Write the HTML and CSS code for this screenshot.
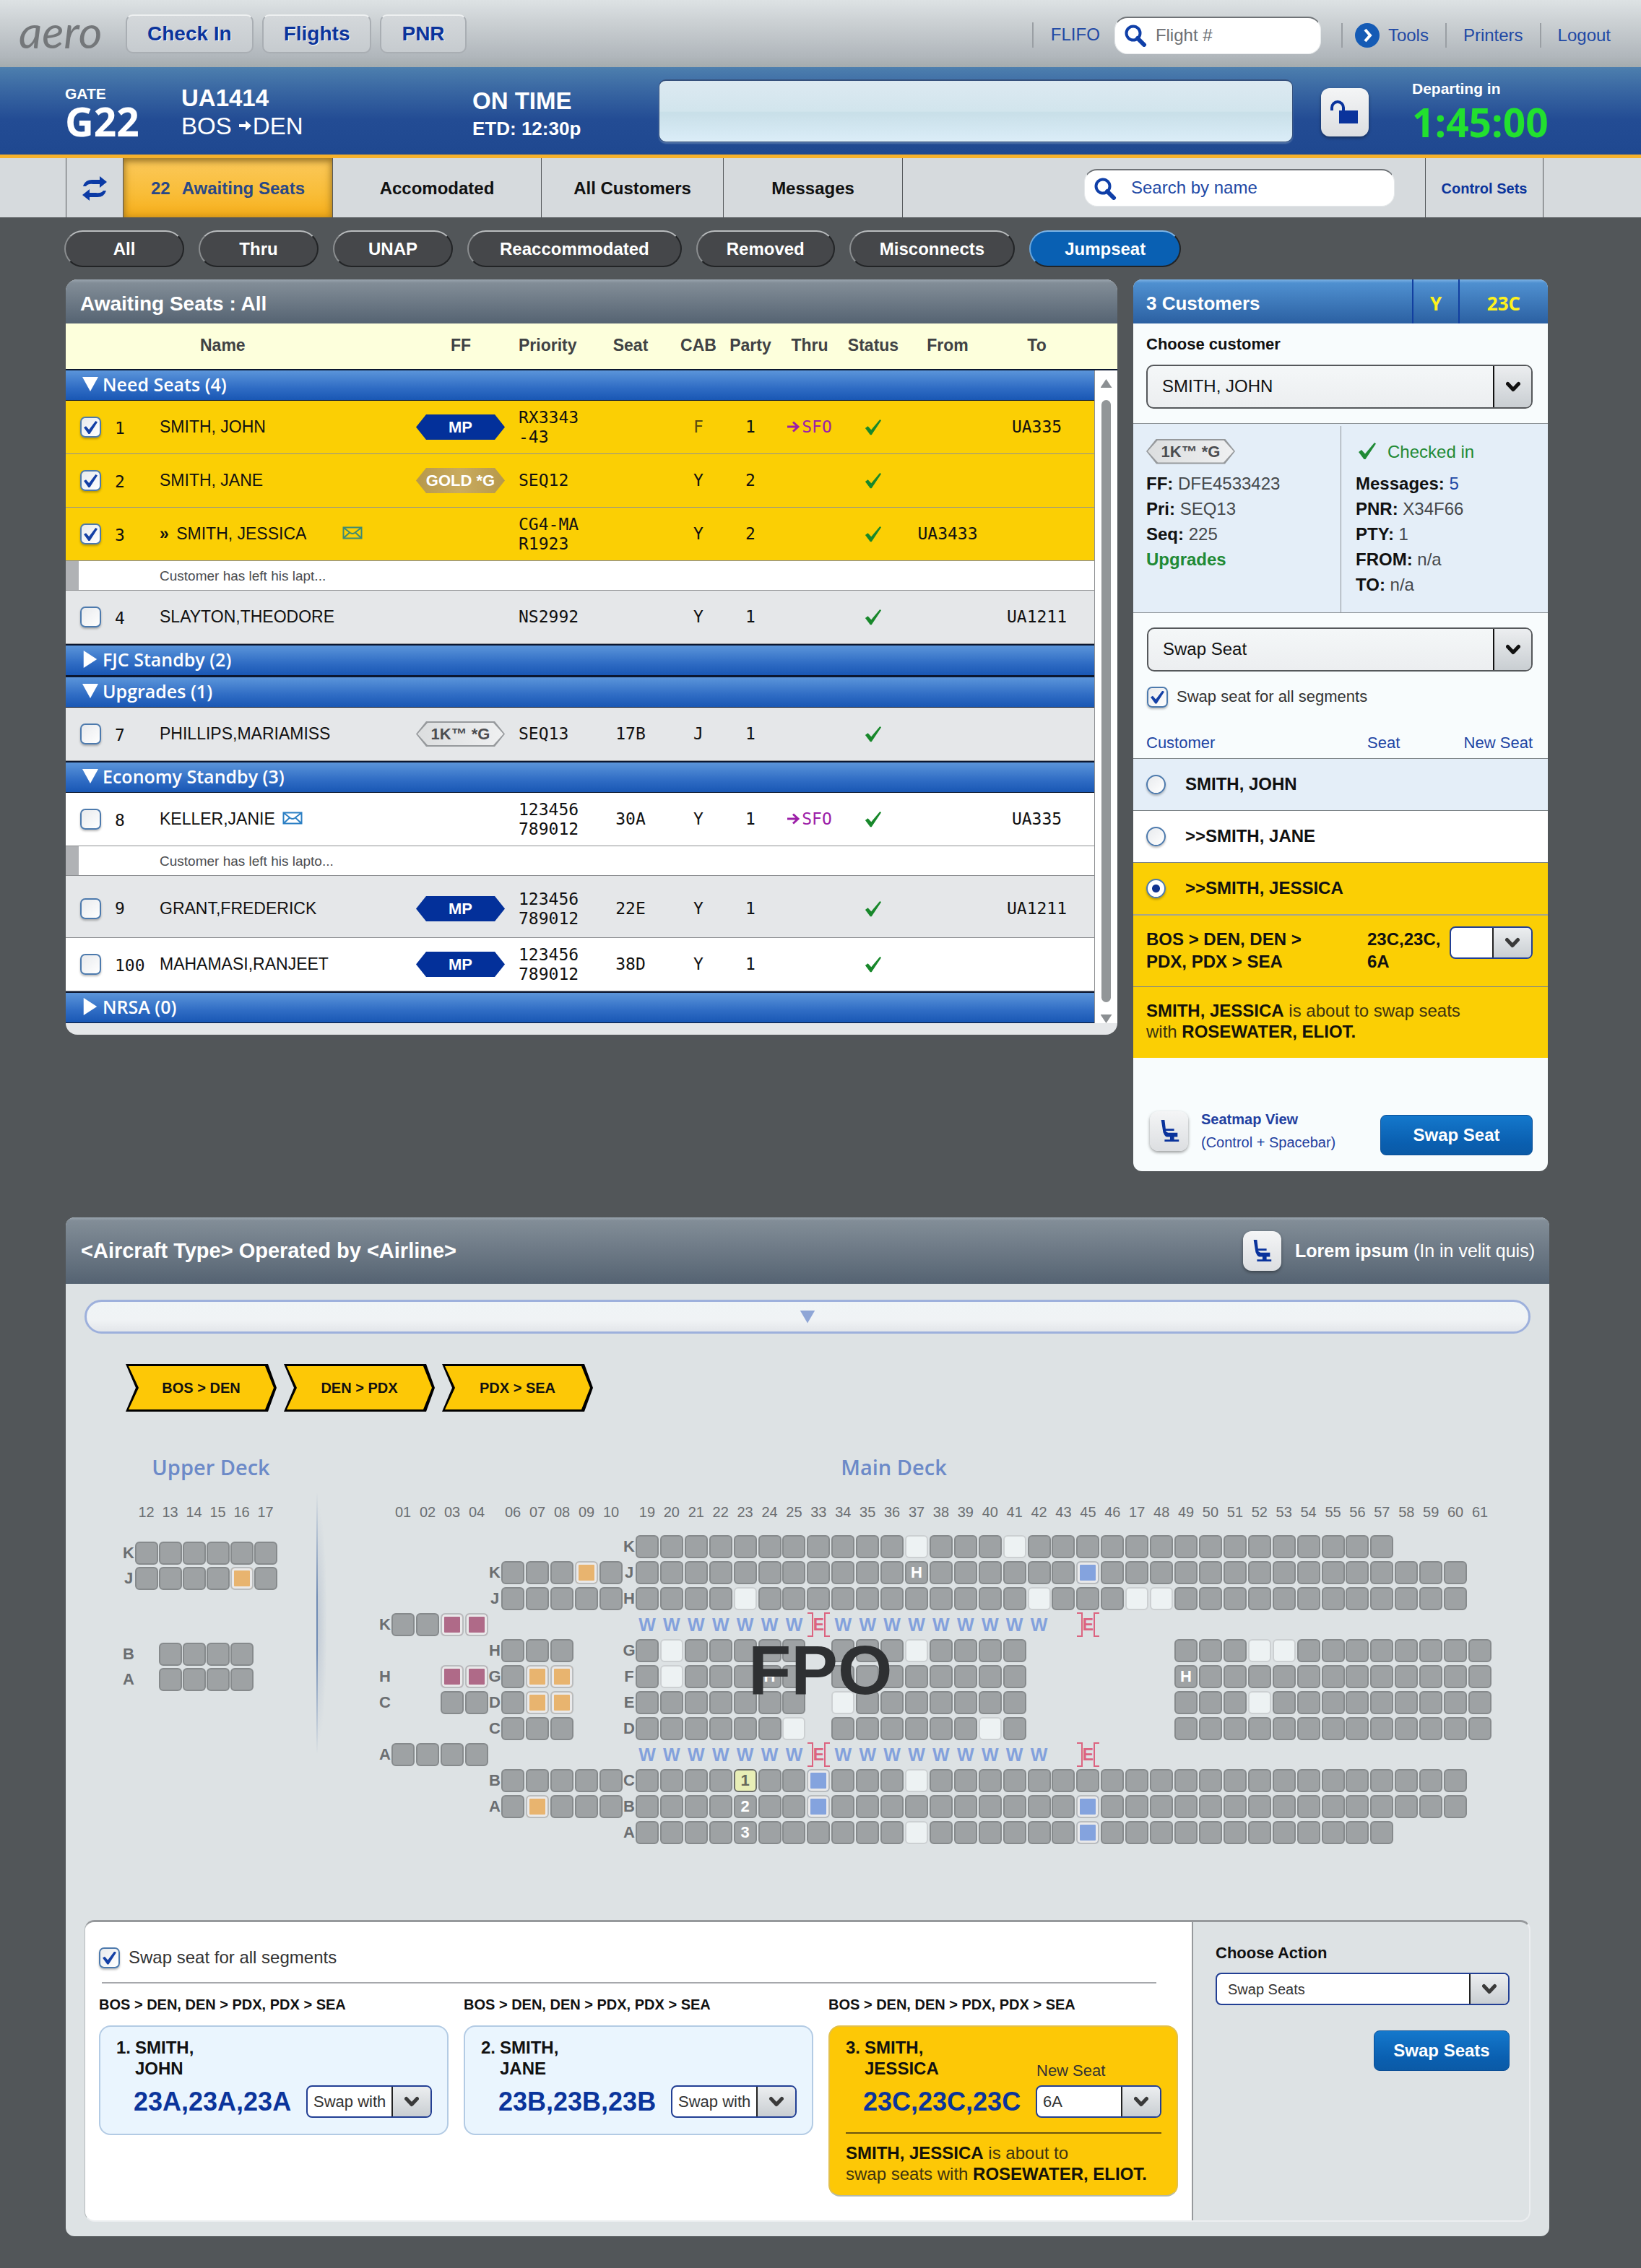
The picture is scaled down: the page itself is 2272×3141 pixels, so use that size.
FILE: index.html
```html
<!DOCTYPE html>
<html lang="en">
<head>
<meta charset="utf-8">
<title>aero – Gate G22 – Awaiting Seats</title>
<meta name="viewport" content="width=device-width, initial-scale=1">
<link rel="stylesheet" href="styles.css">
</head>
<body>
<svg class="sprite" aria-hidden="true">
  <symbol id="i-search" viewBox="0 0 32 32"><circle cx="13" cy="13" r="9.5" fill="none" stroke="currentColor" stroke-width="4"/><path d="M19 20l9 9" stroke="currentColor" stroke-width="6" stroke-linecap="round"/></symbol>
  <symbol id="i-chev" viewBox="0 0 20 16"><path d="M2.500 3.500L10 11.500L17.500 3.500" fill="none" stroke="currentColor" stroke-width="5" stroke-linecap="round" stroke-linejoin="round"/></symbol>
  <symbol id="i-check" viewBox="0 0 26 24"><path d="M1 13l4-3 5 5.500L23 0l2 1.500L10.500 23H8.500z" fill="currentColor"/></symbol>
  <symbol id="i-mail" viewBox="0 0 28 18"><path d="M1.500 1.500h25v15h-25zM2 2l9 7q3 2 6 0l9-7M2 16l8-7.500M26 16l-8-7.500" fill="none" stroke="currentColor" stroke-width="2"/></symbol>
  <symbol id="i-seat" viewBox="0 0 36 36"><path d="M6 2h5l2 17-4 2zM9 19l4 0 3 2h14v6H14q-4-2-5-8zM12 15h13v3H13zM19 27h6v4h-6zM11 31h21v3H11z" fill="currentColor"/></symbol>
  <symbol id="i-to" viewBox="0 0 18 16"><path d="M0 8h14M8 1.500L15 8l-7 6.500" fill="none" stroke="currentColor" stroke-width="3"/></symbol>
</svg>

<header>
  <div class="topbar">
    <div class="logo">aero</div>
    <nav class="apps" aria-label="Applications">
      <button type="button">Check In</button>
      <button type="button">Flights</button>
      <button type="button">PNR</button>
    </nav>
    <div class="tools">
      <label class="flifo" for="flight">FLIFO</label>
      <span class="search search-flight"><svg><use href="#i-search"/></svg><input id="flight" type="text" placeholder="Flight #"></span>
      <a href="#" class="tool"><svg class="go" viewBox="0 0 34 34"><circle cx="17" cy="17" r="17" fill="#155bb5"/><path d="M14 9l7 8-7 8" fill="none" stroke="#fff" stroke-width="4"/></svg>Tools</a>
      <a href="#" class="tool tool-printers">Printers</a>
      <a href="#" class="tool tool-logout">Logout</a>
    </div>
  </div>

  <div class="flightbar">
    <div class="gate"><div class="tiny">GATE</div><div class="huge">G22</div></div>
    <div class="flight"><strong>UA1414</strong><div>BOS <svg class="arrow" viewBox="0 0 18 16"><path d="M0 6h9V1l8 7-8 7v-5H0z" fill="#fff"/></svg>DEN</div></div>
    <div class="status"><div>ON TIME</div><div class="etd">ETD: 12:30p</div></div>
    <div class="notice" role="status"></div>
    <button type="button" class="icon-btn lock" aria-label="Unlock"><svg viewBox="0 0 42 36"><path d="M3 15V11a8 8 0 0 1 16 0v5" fill="none" stroke="#0a339c" stroke-width="4"/><path d="M13 15h26v18H13z" fill="#0a339c"/></svg></button>
    <div class="depart"><div class="tiny">Departing in</div><div class="huge clock">1:45:00</div></div>
  </div>

  <nav class="tabs" aria-label="Lists">
    <button type="button" class="tab-refresh" aria-label="Refresh"><svg viewBox="0 0 36 34"><path d="M2 14Q5 4 16 5h9V0l10 8-10 8v-5h-9Q9 10 6 14z" fill="#0b3aa5"/><path d="M34 20Q31 30 20 29h-9v5L1 26l10-8v5h9q7 1 10-3z" fill="#0b3aa5"/></svg></button>
    <a href="#" class="tab tab-on"><span>22</span> Awaiting Seats</a>
    <a href="#" class="tab tab-acc">Accomodated</a>
    <a href="#" class="tab tab-all">All Customers</a>
    <a href="#" class="tab tab-msg">Messages</a>
    <span class="search search-name"><svg><use href="#i-search"/></svg><input type="text" aria-label="Search by name" placeholder="Search by name"></span>
    <a href="#" class="tab tab-sets">Control Sets</a>
  </nav>
</header>

<main>
  <div class="pills">
    <button type="button" class="pill short">All</button>
    <button type="button" class="pill short">Thru</button>
    <button type="button" class="pill short">UNAP</button>
    <button type="button" class="pill">Reaccommodated</button>
    <button type="button" class="pill mid">Removed</button>
    <button type="button" class="pill mid">Misconnects</button>
    <button type="button" class="pill on">Jumpseat</button>
  </div>

  <div class="lists">
    <section class="panel waiting">
      <h2 class="panel-head">Awaiting Seats : All</h2>
      <div class="waiting-body">
        <table class="pax">
          <colgroup><col class="c-check"><col class="c-num"><col><col class="c-ff"><col class="c-pri"><col class="c-seat"><col class="c-cab"><col class="c-party"><col class="c-thru"><col class="c-status"><col class="c-from"><col class="c-to"></colgroup>
          <thead><tr><td></td><td></td><th class="name">Name</th><th class="ff">FF</th><th class="pri">Priority</th><th>Seat</th><th>CAB</th><th>Party</th><th>Thru</th><th>Status</th><th>From</th><th class="to">To</th></tr></thead>
          <tbody>
            <tr class="group"><th colspan="12"><button type="button"><i class="tri down"></i>Need Seats (4)</button></th></tr>
            <tr class="sel"><td class="chk"><input type="checkbox" checked aria-label="Select SMITH, JOHN"></td><td class="num">1</td><td class="name">SMITH, JOHN</td><td class="ff"><span class="badge mp">MP</span></td><td class="pri">RX3343<br>-43</td><td></td><td class="dim">F</td><td>1</td><td class="thru"><svg><use href="#i-to"/></svg>SFO</td><td class="ok"><svg><use href="#i-check"/></svg></td><td></td><td class="to">UA335</td></tr>
            <tr class="sel"><td class="chk"><input type="checkbox" checked aria-label="Select SMITH, JANE"></td><td class="num">2</td><td class="name">SMITH, JANE</td><td class="ff"><span class="badge gold">GOLD *G</span></td><td class="pri">SEQ12</td><td></td><td>Y</td><td>2</td><td></td><td class="ok"><svg><use href="#i-check"/></svg></td><td></td><td></td></tr>
            <tr class="sel"><td class="chk"><input type="checkbox" checked aria-label="Select SMITH, JESSICA"></td><td class="num">3</td><td class="name"><b>»</b> SMITH, JESSICA<svg class="mail far"><use href="#i-mail"/></svg></td><td></td><td class="pri">CG4-MA<br>R1923</td><td></td><td>Y</td><td>2</td><td></td><td class="ok"><svg><use href="#i-check"/></svg></td><td>UA3433</td><td></td></tr>
            <tr class="note"><td colspan="12">Customer has left his lapt...</td></tr>
            <tr class="alt"><td class="chk"><input type="checkbox" aria-label="Select SLAYTON,THEODORE"></td><td class="num">4</td><td class="name">SLAYTON,THEODORE</td><td></td><td class="pri">NS2992</td><td></td><td>Y</td><td>1</td><td></td><td class="ok"><svg><use href="#i-check"/></svg></td><td></td><td class="to">UA1211</td></tr>
            <tr class="group"><th colspan="12"><button type="button"><i class="tri right"></i>FJC Standby (2)</button></th></tr>
            <tr class="group"><th colspan="12"><button type="button"><i class="tri down"></i>Upgrades (1)</button></th></tr>
            <tr class="alt"><td class="chk"><input type="checkbox" aria-label="Select PHILLIPS,MARIAMISS"></td><td class="num">7</td><td class="name">PHILLIPS,MARIAMISS</td><td class="ff"><span class="badge onek">1K™ *G</span></td><td class="pri">SEQ13</td><td>17B</td><td>J</td><td>1</td><td></td><td class="ok"><svg><use href="#i-check"/></svg></td><td></td><td></td></tr>
            <tr class="group"><th colspan="12"><button type="button"><i class="tri down"></i>Economy Standby (3)</button></th></tr>
            <tr><td class="chk"><input type="checkbox" aria-label="Select KELLER,JANIE"></td><td class="num">8</td><td class="name">KELLER,JANIE<svg class="mail"><use href="#i-mail"/></svg></td><td></td><td class="pri">123456<br>789012</td><td>30A</td><td>Y</td><td>1</td><td class="thru"><svg><use href="#i-to"/></svg>SFO</td><td class="ok"><svg><use href="#i-check"/></svg></td><td></td><td class="to">UA335</td></tr>
            <tr class="note"><td colspan="12">Customer has left his lapto...</td></tr>
            <tr class="alt tall"><td class="chk"><input type="checkbox" aria-label="Select GRANT,FREDERICK"></td><td class="num">9</td><td class="name">GRANT,FREDERICK</td><td class="ff"><span class="badge mp">MP</span></td><td class="pri">123456<br>789012</td><td>22E</td><td>Y</td><td>1</td><td></td><td class="ok"><svg><use href="#i-check"/></svg></td><td></td><td class="to">UA1211</td></tr>
            <tr><td class="chk"><input type="checkbox" aria-label="Select MAHAMASI,RANJEET"></td><td class="num">100</td><td class="name">MAHAMASI,RANJEET</td><td class="ff"><span class="badge mp">MP</span></td><td class="pri">123456<br>789012</td><td>38D</td><td>Y</td><td>1</td><td></td><td class="ok"><svg><use href="#i-check"/></svg></td><td></td><td></td></tr>
            <tr class="group"><th colspan="12"><button type="button"><i class="tri right"></i>NRSA (0)</button></th></tr>
          </tbody>
        </table>
        <div class="scroll" aria-hidden="true"><div class="scroll-head"></div><i class="up"></i><div class="thumb"></div><i class="dn"></i></div>
      </div>
    </section>

    <section class="panel customer">
      <div class="cust-head"><h2>3 Customers</h2><span class="cabin-code">Y</span><span class="seat-code">23C</span></div>
      <div class="choose">
        <label for="cust">Choose customer</label>
        <span class="select big"><select id="cust"><option>SMITH, JOHN</option></select><span class="drop"><svg><use href="#i-chev"/></svg></span></span>
      </div>
      <div class="info">
        <div class="info-left"><div class="line"><span class="badge onek">1K™ *G</span></div>
          <div><b>FF:</b> DFE4533423</div><div><b>Pri:</b> SEQ13</div><div><b>Seq:</b> 225</div><div><a href="#" class="green"><b>Upgrades</b></a></div></div>
        <div class="info-right"><div class="line green"><svg><use href="#i-check"/></svg>Checked in</div>
          <div><b>Messages:</b> <a href="#">5</a></div><div><b>PNR:</b> X34F66</div><div><b>PTY:</b> 1</div><div><b>FROM:</b> n/a</div><div><b>TO:</b> n/a</div></div>
      </div>
      <div class="action">
        <span class="select big"><select aria-label="Action"><option>Swap Seat</option></select><span class="drop"><svg><use href="#i-chev"/></svg></span></span>
        <label class="check"><input type="checkbox" checked>Swap seat for all segments</label>
      </div>
      <div class="swap-head"><span>Customer</span><span>Seat</span><span>New Seat</span></div>
      <label class="pick tint"><input type="radio" name="who">SMITH, JOHN</label>
      <label class="pick white"><input type="radio" name="who">&gt;&gt;SMITH, JANE</label>
      <label class="pick yellow"><input type="radio" name="who" checked>&gt;&gt;SMITH, JESSICA</label>
      <div class="segment"><span>BOS &gt; DEN, DEN &gt;<br>PDX, PDX &gt; SEA</span><span>23C,23C,<br>6A</span>
        <span class="select small"><select aria-label="New seat"><option></option></select><span class="drop"><svg><use href="#i-chev"/></svg></span></span></div>
      <p class="summary"><b>SMITH, JESSICA</b> is about to swap seats<br>with <b>ROSEWATER, ELIOT.</b></p>
      <div class="cust-foot">
        <button type="button" class="icon-btn seat-btn" aria-label="Seatmap view"><svg><use href="#i-seat"/></svg></button>
        <div class="hint"><b>Seatmap View</b><br>(Control + Spacebar)</div>
        <button type="button" class="primary">Swap Seat</button>
      </div>
    </section>
  </div>

  <section class="panel seatmap">
    <div class="map-head"><h2>&lt;Aircraft Type&gt; Operated by &lt;Airline&gt;</h2>
      <button type="button" class="icon-btn seat-btn" aria-label="Seat view"><svg><use href="#i-seat"/></svg></button>
      <div><b>Lorem ipsum</b> (In in velit quis)</div></div>
    <div class="map-body">
      <button type="button" class="collapse" aria-label="Collapse"><i></i></button>
      <div class="legs">
        <button type="button" class="leg">BOS &gt; DEN</button>
        <button type="button" class="leg">DEN &gt; PDX</button>
        <button type="button" class="leg">PDX &gt; SEA</button>
      </div>
      <div class="decks">
        <div class="upper"><h3>Upper Deck</h3><div class="cabin cabin-upper" id="cabin-upper"></div></div>
        <div class="deck-rule"></div>
        <div class="maindeck"><h3>Main Deck</h3>
          <div class="cabins">
            <div class="cabin cabin-front" id="cabin-front"></div>
            <div class="cabin cabin-mid" id="cabin-mid"></div>
            <div class="cabin cabin-rear" id="cabin-rear"></div>
          </div>
          <div class="fpo">FPO</div>
        </div>
      </div>

      <div class="swap">
        <div class="swap-main">
          <label class="check wide"><input type="checkbox" checked>Swap seat for all segments</label>
          <hr>
          <div class="cards">
            <div><h4>BOS &gt; DEN, DEN &gt; PDX, PDX &gt; SEA</h4>
              <div class="card"><div class="who"><span>1.</span><span>SMITH,<br>JOHN</span></div>
                <div class="seats"><strong>23A,23A,23A</strong><span class="select small"><select aria-label="Swap 23A with"><option>Swap with</option></select><span class="drop"><svg><use href="#i-chev"/></svg></span></span></div></div></div>
            <div><h4>BOS &gt; DEN, DEN &gt; PDX, PDX &gt; SEA</h4>
              <div class="card"><div class="who"><span>2.</span><span>SMITH,<br>JANE</span></div>
                <div class="seats"><strong>23B,23B,23B</strong><span class="select small"><select aria-label="Swap 23B with"><option>Swap with</option></select><span class="drop"><svg><use href="#i-chev"/></svg></span></span></div></div></div>
            <div><h4>BOS &gt; DEN, DEN &gt; PDX, PDX &gt; SEA</h4>
              <div class="card active"><div class="who"><span>3.</span><span>SMITH,<br>JESSICA</span><label for="newseat">New Seat</label></div>
                <div class="seats"><strong>23C,23C,23C</strong><span class="select small"><select id="newseat"><option>6A</option></select><span class="drop"><svg><use href="#i-chev"/></svg></span></span></div>
                <p><b>SMITH, JESSICA</b> is about to<br>swap seats with <b>ROSEWATER, ELIOT.</b></p></div></div>
          </div>
        </div>
        <div class="swap-side">
          <label for="act">Choose Action</label>
          <span class="select small"><select id="act"><option>Swap Seats</option></select><span class="drop"><svg><use href="#i-chev"/></svg></span></span>
          <button type="button" class="primary">Swap Seats</button>
        </div>
      </div>
    </div>
  </section>
</main>
<script src="seatmap.js"></script>
</body>
</html>
```
FILE: styles.css
```css
* { box-sizing: border-box; }
body { margin: 0; background: #525659; color: #111; font: 24px/1.2 "Liberation Sans", Arial, sans-serif; }
h2, h3, h4, p { margin: 0; }
a { color: #1f49a5; text-decoration: none; }
button, input, select { font: inherit; color: inherit; margin: 0; padding: 0; border: 0; background: none; }
.sprite { position: absolute; width: 0; height: 0; }

/* Top bar */
.topbar { display: flex; align-items: center; height: 93px; padding: 0 42px 0 26px; background: linear-gradient(#dde2e4, #cdd2d5 30%, #b0b6bb 85%, #a4acae); }
.logo { width: 148px; padding-bottom: 8px; font: italic 400 63px/70px Lato, sans-serif; color: #74777a; }
.apps { display: flex; gap: 12px; }
.apps button { height: 54px; padding: 0 28px; border-radius: 10px; border: 2px solid #a9aeb3; border-top-color: #eef0f1; background: linear-gradient(#d4d8db, #c6cbcf); color: #0b349b; font-weight: bold; font-size: 28px; text-shadow: 1px 1px #fff; }
.tools { display: flex; align-items: center; margin-left: auto; padding-top: 4px; color: #1f49a5; }
.flifo { padding: 3px 20px 3px 24px; border-left: 2px solid #9a9fa4; }
.search { display: flex; align-items: center; gap: 12px; height: 52px; border-radius: 18px; background: #fff; border: 1px solid #e5e8ea; border-top: 2px solid #6f7377; padding: 0 12px; }
.search svg { flex: none; width: 32px; height: 32px; color: #0f3fa8; }
.search input { flex: 1; min-width: 0; outline: 0; }
.search-flight { width: 286px; margin-right: 28px; }
.search-flight input::placeholder { color: #6d7074; opacity: 1; }
.tool { display: flex; align-items: center; padding: 0 23px; border-left: 2px solid #9a9fa4; line-height: 34px; }
.tool .go { width: 34px; height: 34px; margin: 0 12px 0 -6px; }
.tool-logout { padding-right: 0; }

/* Flight bar */
.flightbar { display: flex; align-items: center; height: 126px; padding: 0 127px 0 90px; background: linear-gradient(#4d7fae, #3a68a3 25%, #234c94 60%, #1f4890); border-bottom: 5px solid #f6b12b; color: #fff; }
.tiny { font-size: 21px; line-height: 20px; font-weight: bold; }
.huge { font: bold 55px/56px "Open Sans", sans-serif; }
.gate { width: 161px; padding-top: 9px; }
.flight { width: 403px; padding-top: 2px; font-size: 33px; line-height: 39px; }
.arrow { width: 18px; height: 16px; margin: 0 1px 4px 1px; }
.status { width: 258px; padding-top: 10px; font-weight: bold; font-size: 33px; line-height: 39px; }
.status .etd { font-size: 26px; }
.notice { flex: 1; height: 87px; border-radius: 10px; border: 1px solid #35507c; border-top-width: 2px; background: linear-gradient(#dce9f1, #d2e5ed 50%, #c8dfe8 52%, #dbedf8); box-shadow: 0 2px 2px #5577ab; }
.icon-btn { display: grid; place-items: center; border-radius: 12px; background: linear-gradient(#f4f5f6, #dcdee1); box-shadow: 0 2px 4px #0006; color: #0a339c; }
.lock { width: 66px; height: 67px; margin: 4px 60px 0 39px; }
.lock svg { width: 42px; height: 36px; }
.depart { width: 190px; padding-top: 2px; }
.clock { color: #22e02f; margin-top: 8px; }

/* Tabs */
.tabs { display: flex; align-items: stretch; height: 82px; padding: 0 135px 0 91px; background: #d6dadd; font-weight: bold; font-size: 24px; }
.tab, .tab-refresh { display: flex; align-items: center; justify-content: center; border-right: 1px solid #55585b; padding-top: 2px; color: #111; }
.tab-refresh { width: 80px; border-left: 1px solid #55585b; }
.tab-refresh svg { width: 38px; height: 34px; }
.tab-on { width: 290px; gap: 16px; color: #2a4886; background: linear-gradient(#fbc95c, #f9bd38 60%, #f6ae1a); box-shadow: inset 0 0 14px #a6711280, inset 0 4px 8px #9b7a30; }
.tab-acc { width: 289px; }
.tab-all { width: 252px; }
.tab-msg { width: 248px; }
.search-name { width: 430px; margin: auto 42px auto auto; gap: 20px; font-weight: normal; }
.search-name input::placeholder { color: #1f49a5; opacity: 1; }
.tab-sets { width: 164px; border-left: 1px solid #55585b; font-size: 20px; color: #0b349b; }

main { padding: 18px 127px 44px 91px; }

/* Filter pills */
.pills { display: flex; gap: 20px; padding-bottom: 17px; margin-left: -2px; }
.pill { height: 51px; padding: 2px 43px 0; border-radius: 26px; background: #45474a; border: 2px solid #222426; border-top-color: #b9bcbe; border-left-color: #8b8e90; color: #fff; font-weight: bold; font-size: 24px; }
.pill.short { width: 166px; padding: 2px 0 0; }
.pill.mid { padding: 2px 40px 0; }
.pill.on { padding: 2px 47px 0; background: #0960b3; border-top-color: #7db5e8; border-left-color: #6aa6dd; }

.lists { display: grid; grid-template-columns: minmax(0, 1fr) 574px; gap: 22px; align-items: start; padding-right: 2px; }
.panel { border-radius: 12px; overflow: hidden; }

/* Waiting list */
.waiting { border-radius: 16px; background: #e5e7e9; padding-bottom: 16px; }
.panel-head { height: 61px; padding: 0 20px; font-size: 28px; line-height: 67px; color: #fff; background: linear-gradient(#9aa5af, #828d97 8%, #556372); }
.waiting-body { display: flex; }
.pax { flex: 1; width: 100%; border-collapse: separate; border-spacing: 0; table-layout: fixed; font-family: "DejaVu Sans Mono", monospace; font-size: 23px; line-height: 27px; text-align: center; background: #fff; }
.c-check { width: 68px; } .c-num { width: 62px; } .c-ff { width: 142px; } .c-pri { width: 102px; } .c-seat { width: 106px; }
.c-cab { width: 82px; } .c-party { width: 62px; } .c-thru { width: 102px; } .c-status { width: 74px; } .c-from { width: 132px; } .c-to { width: 137px; }
.pax td, .pax th { padding: 0; height: 74px; border-bottom: 1px solid #8e9093; }
.pax thead th, .pax thead td { height: 63px; padding-bottom: 3px; background: #fdffdc; border-bottom: 0; font: bold 23px/27px "Liberation Sans", Arial, sans-serif; color: #404244; }
.pax .name, .pax .num, .pax .pri, .pax .chk { text-align: left; }
.pax .name { font-family: "Liberation Sans", Arial, sans-serif; white-space: nowrap; }
.pax thead .name { padding-left: 56px; }
.pax .name b { margin-right: 4px; }
.pax .num { padding-top: 3px; }
.pax .chk { padding-left: 20px; }
.pax .chk input { display: block; }
.pax .ff { padding-right: 18px; }
.pax .to { padding-right: 22px; }
.pax .sel td { background: #fbcf04; }
.pax .alt td { background: #e5e7e9; }
.pax .tall td { height: 86px; padding-top: 6px; }
.pax .dim { color: #5c4a10; }
.pax .thru { color: #9c1fa8; }
.thru svg { width: 18px; height: 16px; margin-right: 2px; }
.pax .note td { height: 41px; padding-left: 130px; text-align: left; font: 19px/27px "Liberation Sans", Arial, sans-serif; color: #4b4d50; box-shadow: inset 18px 0 #b0b2b5; }
.pax .group th { height: 44px; padding-bottom: 3px; border-top: 2px solid #0b1730; border-bottom: 1px solid #0b1730; background: linear-gradient(#5b95da, #2f6cc4 60%, #1957b4); }
.group button { display: flex; align-items: center; width: 100%; padding-left: 23px; gap: 6px; color: #fff; font: 600 25px/34px "Open Sans", sans-serif; }
.tri { width: 22px; height: 24px; background: #fff; }
.tri.down { clip-path: polygon(0 8%, 100% 8%, 50% 92%); }
.tri.right { clip-path: polygon(8% 0, 92% 50%, 8% 100%); }
.ok svg { display: block; width: 24px; height: 24px; margin: 0 auto; color: #18882b; }
.mail { width: 28px; height: 18px; margin-left: 10px; color: #2b7fc4; }
.mail.far { margin-left: 50px; color: #3f8a72; }
.badge { display: block; position: relative; isolation: isolate; width: 123px; height: 35px; font: bold 22px/35px "Liberation Sans", Arial, sans-serif; text-align: center; color: #fff; clip-path: polygon(0 50%, 14px 0, calc(100% - 14px) 0, 100% 50%, calc(100% - 14px) 100%, 14px 100%); }
.mp { background: #03309a; }
.gold { background: linear-gradient(90deg, #b6984b, #c9ab5f, #b6984b); }
.onek { background: #96999c; color: #4b4d50; }
.onek::before { content: ""; position: absolute; inset: 2px; z-index: -1; background: linear-gradient(90deg, #dcdedf, #eff0f1); clip-path: inherit; }
.scroll { flex: none; display: flex; flex-direction: column; align-items: center; width: 32px; background: #fff; border-left: 1px solid #8e9093; }
.scroll-head { height: 65px; width: 34px; margin-left: -2px; background: #fdffdc; border-bottom: 2px solid #0b1730; }
.scroll .thumb { flex: 1; width: 13px; margin: 17px 0; border-radius: 7px; background: #929698; }
.scroll i { width: 16px; height: 12px; background: #8b8f92; }
.up { margin-top: 12px; clip-path: polygon(50% 0, 100% 100%, 0 100%); }
.dn { clip-path: polygon(0 0, 100% 0, 50% 100%); }

/* Form controls */
input[type=checkbox] { appearance: none; flex: none; width: 29px; height: 29px; border: 2px solid #4d7aad; border-radius: 7px; background: linear-gradient(135deg, #e8eaed, #fff); box-shadow: 0 2px 3px #0004; }
input[type=checkbox]:checked::after { content: ""; display: block; width: 19px; height: 18px; margin: 4px 3px; background: #1440a6; clip-path: polygon(0 50%, 16% 40%, 38% 66%, 86% 0, 100% 8%, 44% 100%, 34% 100%); }
input[type=radio] { appearance: none; flex: none; width: 27px; height: 27px; border: 2px solid #4d7aad; border-radius: 50%; background: linear-gradient(135deg, #e8eaed, #fff); box-shadow: 0 2px 3px #0004; }
input[type=radio]:checked { background: radial-gradient(circle, #10338f 5px, #fff 6px); }
.select { display: flex; overflow: hidden; background: #fff; }
.select select { appearance: none; flex: 1; min-width: 0; outline: 0; }
.drop { flex: none; display: grid; place-items: center; background: linear-gradient(#eceef0, #c9ced2); pointer-events: none; }
.drop svg { width: 20px; height: 16px; }
.select.big { height: 61px; border: 2px solid #55585b; border-radius: 10px; background: linear-gradient(#f4f7f8, #eceef0); }
.select.big select { padding-left: 20px; font-size: 24px; }
.select.big .drop { width: 53px; border-left: 2px solid #111; }
.select.small { height: 45px; border: 2px solid #223f94; border-radius: 8px; }
.select.small select { padding-left: 8px; font-size: 22px; color: #333; }
.select.small .drop { width: 54px; border-left: 2px solid #222; color: #3a3a3a; }
.check { display: flex; align-items: center; gap: 12px; font-size: 22px; color: #333; }
.primary { height: 56px; border-radius: 8px; border: 1px solid #0a4f97; background: linear-gradient(#1478cc, #0a5fb0 70%, #0b5aa6); color: #fff; font-weight: bold; font-size: 24px; }

/* Customer panel */
.customer { background: #f8fcfd; }
.cust-head { display: flex; height: 61px; color: #fff; line-height: 66px; background: linear-gradient(#7db2e4, #4f90d0 8%, #2b60a2); }
.cust-head h2 { flex: 1; padding-left: 18px; font-size: 26px; }
.cust-head span { border-left: 2px solid #123fa0; color: #fff21a; font: bold 26px/66px "Open Sans", sans-serif; text-align: center; }
.cabin-code { width: 64px; }
.seat-code { width: 124px; }
.choose { padding: 14px 21px 20px 18px; border-bottom: 1px solid #8e9498; font-size: 22px; }
.choose label { display: block; height: 43px; line-height: 30px; font-weight: bold; }
.info { display: grid; grid-template-columns: 287px 1fr; height: 262px; padding-top: 3px; background: #e4eef8; border-bottom: 1px solid #8e9498; line-height: 35px; color: #45484b; }
.info b { color: #111; }
.info .green, .info .green b { color: #1f8a35; }
.info-left, .info-right { padding: 17px 0 0 18px; }
.info-right { border-left: 1px solid #8e9498; padding-left: 20px; }
.line { display: flex; align-items: center; height: 45px; padding-bottom: 9px; }
.line svg { width: 28px; height: 24px; margin: 0 14px 0 2px; }
.action { padding: 20px 21px 0 19px; }
.action .check { margin-top: 18px; height: 34px; }
.swap-head { display: grid; grid-template-columns: 306px 1fr auto; margin-top: 26px; padding: 0 21px 0 18px; height: 42px; line-height: 42px; font-size: 22px; color: #2145a4; }
.pick { display: flex; align-items: center; gap: 27px; height: 72px; padding-left: 18px; border-top: 1px solid #7d8488; font-weight: bold; }
.tint { background: #e4eef8; }
.white { background: #fff; }
.yellow, .segment, .summary { background: #fbcf04; }
.segment { display: grid; grid-template-columns: 306px 114px 1fr; height: 101px; padding: 17px 21px 0 18px; border-top: 2px solid #a7a68a; border-bottom: 1px solid #7d8488; line-height: 31px; font-weight: bold; }
.segment .select { align-self: start; margin-top: -2px; }
.summary { height: 98px; padding: 18px; line-height: 29px; color: #3d3310; }
.summary b { color: #14120a; }
.cust-foot { display: flex; align-items: center; gap: 18px; padding: 67px 21px 22px 23px; font-size: 20px; line-height: 32px; color: #1f40a0; }
.cust-foot .primary { width: 211px; margin: 12px 0 0 auto; }
.seat-btn { width: 53px; height: 55px; }
.seat-btn svg { width: 34px; height: 34px; }

/* Seat map */
.seatmap { margin-top: 64px; background: #dde2e4; }
.map-head { display: flex; align-items: center; height: 92px; padding: 0 20px 0 21px; font-size: 25px; color: #fff; background: linear-gradient(#9aa5af, #828d97 5%, #556372); }
.map-head h2 { flex: 1; font-size: 29px; }
.map-head .seat-btn { margin-right: 19px; }
.map-body { padding: 22px 26px 20px; }
.collapse { display: grid; place-items: center; width: 100%; height: 47px; border: 3px solid #9db0dc; border-radius: 24px; background: linear-gradient(#eff4f6, #f0f3f5 60%, #e3e6ea); }
.collapse i { width: 21px; height: 18px; background: #8fa6d6; clip-path: polygon(0 0, 100% 0, 50% 100%); }
.legs { display: flex; gap: 10px; padding: 42px 0 0 57px; }
.leg { position: relative; isolation: isolate; width: 209px; height: 66px; font-size: 20px; font-weight: bold; background: #000; clip-path: polygon(0 0, calc(100% - 12px) 0, 100% 50%, calc(100% - 12px) 100%, 0 100%, 14px 50%); }
.leg::before { content: ""; position: absolute; inset: 3px 4px; z-index: -1; background: #fdc806; clip-path: inherit; }
.decks { display: flex; padding: 57px 53px 0 53px; }
.decks h3 { font: 600 29px/40px "Open Sans", sans-serif; color: #6c8ac8; text-align: center; }
.upper h3 { padding-left: 30px; }
.upper { width: 214px; }
.deck-rule { width: 16px; height: 360px; margin: 56px 71px 0 54px; border-left: 2px solid; border-image: linear-gradient(#6f8bb400, #6f8bb4 40%, #6f8bb4 60%, #6f8bb400) 1; background: radial-gradient(ellipse at left, #c3ccd6, #c3ccd600 65%); }
.maindeck { position: relative; flex: 1; min-width: 0; }
.maindeck h3 { padding-right: 116px; }
.cabins { display: flex; }
.cabin { display: grid; padding-top: 30px; grid-template-rows: 42px; grid-auto-rows: 36px; align-items: center; justify-items: center; font-weight: bold; font-size: 22px; line-height: 24px; color: #6b6e71; }
.cabin-front { grid-template-columns: 16px repeat(4, 34px); }
.cabin-mid { grid-template-columns: 16px repeat(5, 34px); }
.cabin-rear { flex: 1; grid-template-columns: 16px repeat(35, minmax(0, 1fr)); }
.cabin-upper { grid-template-columns: 16px repeat(6, 33px); grid-template-rows: 51px; grid-auto-rows: 35px; }
.no { align-self: start; font-weight: normal; font-size: 20px; }
.seat { display: grid; place-items: center; width: 32px; height: 32px; border-radius: 6px; background: #9ea2a4; border: 2px solid #868a8c; color: #fff; }
.free { background: #edf2f3; border-color: #ccd0d2; }
.orange, .maroon, .blue { border-color: #b9bcbe; box-shadow: inset 0 0 0 3px #e9e9ea; }
.orange { background: #e8b46f; }
.maroon { background: #af6a88; }
.blue { background: #84a3de; }
.chosen { background: #e8eeb6; border-color: #6d6f6a; color: #66685a; }
.wing { font-size: 25px; color: #83a1dc; }
.exit { display: flex; align-items: center; font-size: 23px; color: #dc6480; }
.exit::before, .exit::after { content: ""; width: 6px; height: 30px; border: solid #dc6480; }
.exit::before { border-width: 2px 2px 2px 0; }
.exit::after { border-width: 2px 0 2px 2px; }
.fpo { position: absolute; left: 511px; top: 246px; font: bold 97px/110px "Liberation Sans", Arial, sans-serif; color: #2e3032; }

/* Swap drawer */
.swap { display: grid; grid-template-columns: minmax(0, 1fr) 467px; margin-top: 103px; border-radius: 14px; overflow: hidden; border-top: 3px solid #96999c; border-left: 1px solid #b5b9bb; border-right: 2px solid #eceef0; border-bottom: 2px solid #eceef0; }
.swap-main { background: #fff; padding: 33px 19px 33px; }
.check.wide { font-size: 24px; height: 32px; }
.swap hr { height: 2px; margin: 18px 30px 17px 4px; border: 0; background: #a6a8ac; }
.cards { display: grid; grid-template-columns: repeat(3, minmax(0, 1fr)); gap: 21px; }
.cards h4 { font-size: 20px; line-height: 24px; margin-bottom: 17px; }
.card { height: 152px; padding: 14px 21px 0 22px; border: 2px solid #b3cbe4; border-radius: 16px; background: #eaf5fe; line-height: 29px; }
.card.active { height: 237px; background: #fdc806; border-color: #e3c04a; border-bottom-color: #b4b9a8; }
.who { display: flex; gap: 6px; font-weight: bold; }
.who label { width: 173px; margin-left: auto; align-self: flex-end; font-weight: normal; font-size: 22px; line-height: 22px; color: #333; }
.seats { display: flex; align-items: center; justify-content: space-between; margin-top: 9px; padding-left: 24px; }
.seats strong { font-size: 36px; line-height: 45px; color: #0b349b; white-space: nowrap; }
.seats .select { width: 174px; }
.card p { margin-top: 20px; padding-top: 12px; border-top: 2px solid #6a5410; color: #3d3310; white-space: nowrap; }
.card p b { color: #14120a; }
.swap-side { display: flex; flex-direction: column; padding: 30px 27px 0 31px; border-left: 2px solid #96999c; }
.swap-side label { margin-bottom: 14px; font-size: 22px; font-weight: bold; line-height: 26px; }
.swap-side .select select { padding-left: 15px; font-size: 20px; }
.swap-side .primary { width: 188px; margin: 35px 0 0 auto; }
```
FILE: seatmap.js
```js
// Seat codes: # taken, o orange, m maroon, b blue, f free,
// 1/2/3/H labelled seats, W wing row, E exit, space = aisle.
// The first character of a row is its letter.
const SEATS = {
  '#': 'seat', f: 'seat free', o: 'seat orange', m: 'seat maroon', b: 'seat blue',
  1: 'seat chosen', 2: 'seat', 3: 'seat', H: 'seat', W: 'wing', E: 'exit'
};
const LABELLED = '123HWE';

const CABINS = {
  'cabin-upper': {
    numbers: '12 13 14 15 16 17',
    rows: ['K######', 'J####o#', '', '', 'B ####', 'A ####']
  },
  'cabin-front': {
    numbers: '01 02 03 04',
    rows: ['', '', '', 'K##mm', '', 'H  mm', 'C  ##', '', 'A####']
  },
  'cabin-mid': {
    numbers: '06 07 08 09 10',
    rows: ['', 'K###o#', 'J#####', '', 'H###', 'G#oo', 'D#oo', 'C###', '', 'B#####', 'A#o###']
  },
  'cabin-rear': {
    numbers: '19 20 21 22 23 24 25 33 34 35 36 37 38 39 40 41 42 43 45 46 17 48 49 50 51 52 53 54 55 56 57 58 59 60 61',
    rows: [
      'K###########f###f###############',
      'J###########H######b###############',
      'H####f###########f###ff############',
      ' WWWWWWWEWWWWWWWWW E',
      'G#f##### ###f####      ###ff########',
      'F#f###H# ########      H############',
      'E####### f#######      ###f#########',
      'D######f ######f#      #############',
      ' WWWWWWWEWWWWWWWWW E',
      'C####1##b###f######################',
      'B####2##b##########b###############',
      'A####3######f######b############'
    ]
  }
};

for (const [id, cabin] of Object.entries(CABINS)) {
  const host = document.getElementById(id);
  const add = (text, cls, row, col) => {
    const el = document.createElement('span');
    el.textContent = text;
    el.className = cls;
    el.style.gridArea = `${row} / ${col}`;
    host.append(el);
  };
  cabin.numbers.split(' ').forEach((n, i) => add(n, 'no', 1, i + 2));
  cabin.rows.forEach((codes, r) => {
    [...codes].forEach((code, c) => {
      if (code === ' ') return;
      if (c === 0) add(code, 'letter', r + 2, 1);
      else add(LABELLED.includes(code) ? code : '', SEATS[code], r + 2, c + 1);
    });
  });
}
```
